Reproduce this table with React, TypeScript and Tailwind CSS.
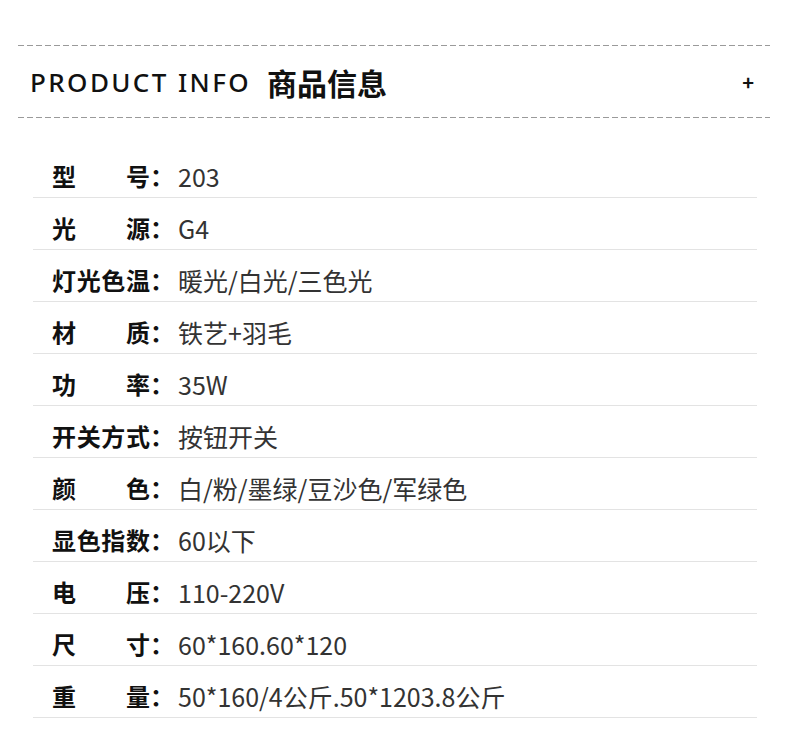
const rows: { label: string; value: string }[] = [
  { label: "型号", value: "203" },
  { label: "光源", value: "G4" },
  { label: "灯光色温", value: "暖光/白光/三色光" },
  { label: "材质", value: "铁艺+羽毛" },
  { label: "功率", value: "35W" },
  { label: "开关方式", value: "按钮开关" },
  { label: "颜色", value: "白/粉/墨绿/豆沙色/军绿色" },
  { label: "显色指数", value: "60以下" },
  { label: "电压", value: "110-220V" },
  { label: "尺寸", value: "60*160.60*120" },
  { label: "重量", value: "50*160/4公斤.50*1203.8公斤" },
];

const font = {
  fontFamily: '"Noto Sans CJK SC", "Noto Sans", sans-serif',
};

function Dashed() {
  return (
    <div className="h-px w-full bg-[linear-gradient(to_right,#9a9a9a_6px,transparent_6px)] bg-[length:9px_1px] bg-repeat-x" />
  );
}

export default function App() {
  return (
    <div className="w-[790px] h-[752px] bg-white" style={font}>
      <div className="pt-[45px] pl-[18px] pr-[20px]">
        <Dashed />
        {/* Header */}
        <div className="h-[71px] flex items-center pl-[12px] pr-[16px]">
          <span className="font-['Noto_Sans'] text-[26px] font-medium tracking-[2.4px] text-[#111] leading-none">
            PRODUCT INFO
          </span>
          <span className="ml-[16px] text-[30px] font-bold text-[#111] leading-none">
            商品信息
          </span>
          <span className="ml-auto text-[20px] font-bold text-[#111] leading-none">
            +
          </span>
        </div>
        <Dashed />
      </div>

      {/* Spec rows */}
      <div className="mt-[28px] ml-[33px] w-[724px]">
        {rows.map((r) => (
          <div
            key={r.label}
            className="flex items-center pt-[14px] pb-[5px] pl-[19px] border-b border-[#e3e3e3] leading-[32px]"
          >
            <span className="w-[98px] text-[24px] font-bold text-[#111] text-justify [text-align-last:justify]">
              {r.label}
            </span>
            <span className="text-[24px] font-bold text-[#111]">：</span>
            <span className="ml-[4px] text-[25px] text-[#333]">{r.value}</span>
          </div>
        ))}
      </div>
    </div>
  );
}
